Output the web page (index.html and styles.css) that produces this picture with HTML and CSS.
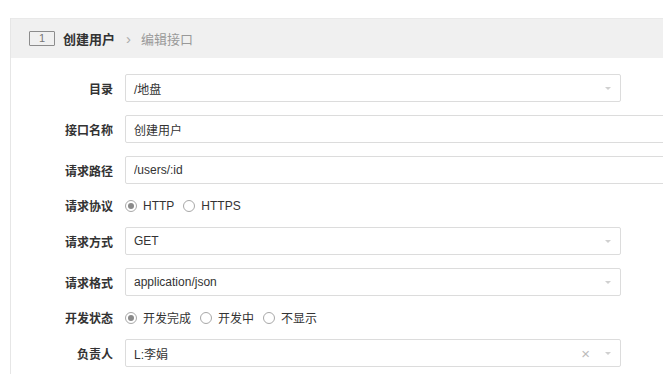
FILE: index.html
```html
<!DOCTYPE html>
<html lang="zh-CN">
<head>
    <meta charset="UTF-8">
    <title>编辑接口</title>
    <link rel="stylesheet" href="styles.css">
</head>
<body>
    <div class="panel">
        <!-- Breadcrumb header -->
        <div class="panel-head">
            <span class="step">1</span>
            <span class="crumb-main">创建用户</span>
            <span class="crumb-sep">&rsaquo;</span>
            <span class="crumb-sub">编辑接口</span>
        </div>

        <div class="form">
            <div class="row">
                <label class="label">目录</label>
                <div class="select">
                    <span class="value">/地盘</span>
                    <span class="caret"></span>
                </div>
            </div>

            <div class="row">
                <label class="label">接口名称</label>
                <input class="input" type="text" value="创建用户">
            </div>

            <div class="row">
                <label class="label">请求路径</label>
                <input class="input" type="text" value="/users/:id">
            </div>

            <div class="row radio-row">
                <label class="label">请求协议</label>
                <span class="radio checked"></span><span class="radio-text">HTTP</span>
                <span class="radio"></span><span class="radio-text">HTTPS</span>
            </div>

            <div class="row">
                <label class="label">请求方式</label>
                <div class="select">
                    <span class="value">GET</span>
                    <span class="caret"></span>
                </div>
            </div>

            <div class="row">
                <label class="label">请求格式</label>
                <div class="select">
                    <span class="value">application/json</span>
                    <span class="caret"></span>
                </div>
            </div>

            <div class="row radio-row">
                <label class="label">开发状态</label>
                <span class="radio checked"></span><span class="radio-text">开发完成</span>
                <span class="radio"></span><span class="radio-text">开发中</span>
                <span class="radio"></span><span class="radio-text">不显示</span>
            </div>

            <div class="row">
                <label class="label">负责人</label>
                <div class="select">
                    <span class="value">L:李娟</span>
                    <span class="clear">&times;</span>
                    <span class="caret"></span>
                </div>
            </div>
        </div>
    </div>
</body>
</html>
```

FILE: styles.css
```css
/* Global styles */
body {
    font-family: "Liberation Sans", "Noto Sans CJK SC", sans-serif;
    font-size: 12px;
    color: #333;
    background: #fff;
    margin: 0;
    padding: 18px 0 0 10px;
    overflow: hidden;
}

.panel {
    border-left: 1px solid #e6e6e6;
    height: calc(100vh - 18px);
    overflow: hidden;
}

/* Header */
.panel-head {
    display: flex;
    align-items: center;
    height: 39px;
    margin-left: -1px;
    padding-left: 19px;
    background: #f0f0f0;
    border-top: 1px solid #e9e9e9;
}

.step {
    width: 24px;
    height: 13px;
    line-height: 13px;
    border: 1px solid #8c8c8c;
    border-radius: 1px;
    color: #777;
    font-size: 11px;
    text-align: center;
    margin-right: 8px;
}

.crumb-main {
    font-size: 13px;
    font-weight: bold;
    color: #333;
}

.crumb-sep {
    color: #aaa;
    font-size: 15px;
    margin: 0 10px 0 11px;
}

.crumb-sub {
    font-size: 13px;
    color: #999;
}

/* Form */
.form {
    padding-top: 16px;
}

.row {
    display: flex;
    align-items: center;
    height: 28px;
    margin-bottom: 13px;
}

.radio-row {
    height: 17px;
}

.label {
    width: 102px;
    padding-right: 12px;
    text-align: right;
    font-weight: bold;
    color: #333;
    flex-shrink: 0;
}

.input, .select {
    box-sizing: border-box;
    height: 28px;
    border: 1px solid #dcdcdc;
    border-radius: 2px;
    padding: 0 8px;
    font-family: inherit;
    font-size: 12px;
    color: #333;
    outline: none;
}

.input {
    width: 620px;
    flex-shrink: 0;
}

.select {
    width: 496px;
    display: flex;
    align-items: center;
}

.select .value {
    flex: 1;
}

.caret {
    width: 0;
    height: 0;
    border-left: 3px solid transparent;
    border-right: 3px solid transparent;
    border-top: 3px solid #d0d0d0;
    margin-right: 1px;
}

.clear {
    color: #bbb;
    font-size: 15px;
    margin-right: 15px;
}

/* Radios */
.radio {
    box-sizing: border-box;
    width: 12px;
    height: 12px;
    border: 1px solid #a8a8a8;
    border-radius: 50%;
    margin-right: 6px;
    position: relative;
    flex-shrink: 0;
}

.radio.checked::after {
    content: "";
    position: absolute;
    left: 2px;
    top: 2px;
    width: 6px;
    height: 6px;
    border-radius: 50%;
    background: #8a8a8a;
}

.radio-text {
    margin-right: 9px;
    color: #333;
}
```
